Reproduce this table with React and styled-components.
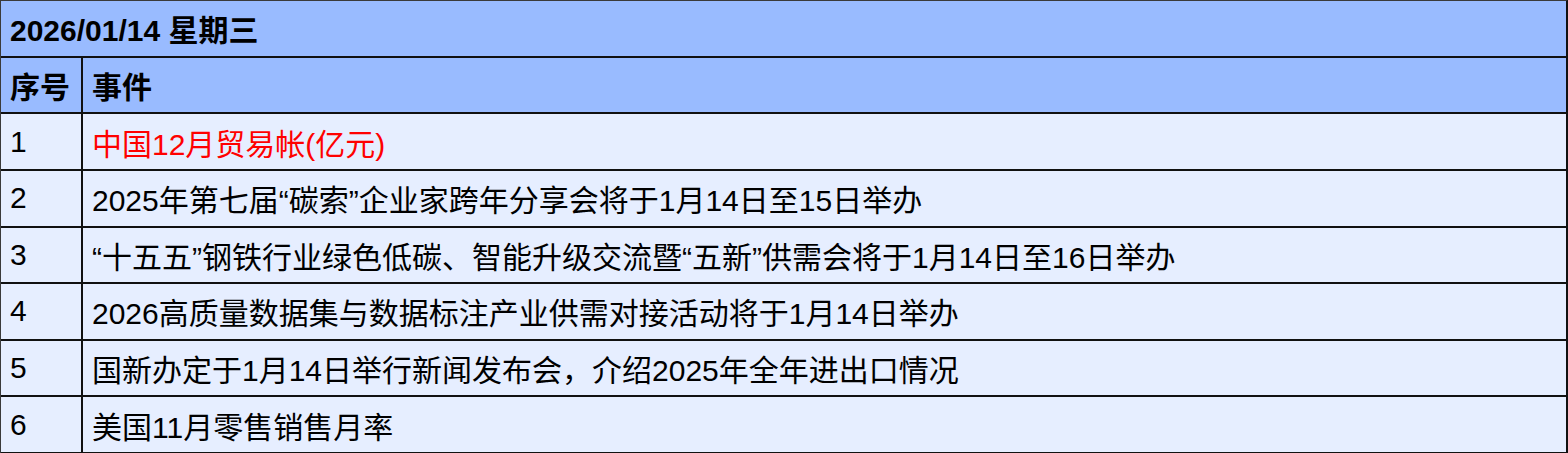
import React from "react";
import styled, { createGlobalStyle } from "styled-components";

const Global = createGlobalStyle`
  html, body { margin: 0; padding: 0; background: #ffffff; }
  body { font-family: "Liberation Sans", "Noto Sans CJK SC", sans-serif; }
`;

const Table = styled.div`
  width: 1568px;
  height: 453px;
  overflow: hidden;
  box-sizing: border-box;
  border-top: 1px solid #3a3a3a;
  border-left: 1px solid #3a3a3a;
  border-right: 2px solid #111;
  display: flex;
  flex-direction: column;
`;

const TitleRow = styled.div`
  flex: none;
  height: 56.625px;
  box-sizing: border-box;
  border-bottom: 2px solid #111;
  background: #99bbff;
  display: flex;
  align-items: center;
  padding-left: 9px;
  font-size: 30px;
  font-weight: 700;
  color: #000;
`;

const Row = styled.div`
  flex: none;
  height: 56.625px;
  box-sizing: border-box;
  border-bottom: 2px solid #111;
  background: ${(p) => (p.$head ? "#99bbff" : "#e6eeff")};
  display: grid;
  grid-template-columns: 82px 1fr;
  font-size: 30px;
  font-weight: ${(p) => (p.$head ? 700 : 400)};
  color: #000;
`;

const Cell = styled.div`
  box-sizing: border-box;
  display: flex;
  align-items: center;
  padding-left: 9px;
  white-space: nowrap;
  color: ${(p) => (p.$red ? "#ff0000" : "inherit")};
  border-right: ${(p) => (p.$first ? "2px solid #111" : "none")};
`;

const events = [
  { text: "中国12月贸易帐(亿元)", red: true },
  { text: "2025年第七届“碳索”企业家跨年分享会将于1月14日至15日举办" },
  { text: "“十五五”钢铁行业绿色低碳、智能升级交流暨“五新”供需会将于1月14日至16日举办" },
  { text: "2026高质量数据集与数据标注产业供需对接活动将于1月14日举办" },
  { text: "国新办定于1月14日举行新闻发布会，介绍2025年全年进出口情况" },
  { text: "美国11月零售销售月率" },
];

export default function App() {
  return (
    <>
      <Global />
      <Table>
        <TitleRow>2026/01/14 星期三</TitleRow>
        <Row $head>
          <Cell $first>序号</Cell>
          <Cell>事件</Cell>
        </Row>
        {events.map((e, i) => (
          <Row key={i}>
            <Cell $first>{i + 1}</Cell>
            <Cell $red={e.red}>{e.text}</Cell>
          </Row>
        ))}
      </Table>
    </>
  );
}
